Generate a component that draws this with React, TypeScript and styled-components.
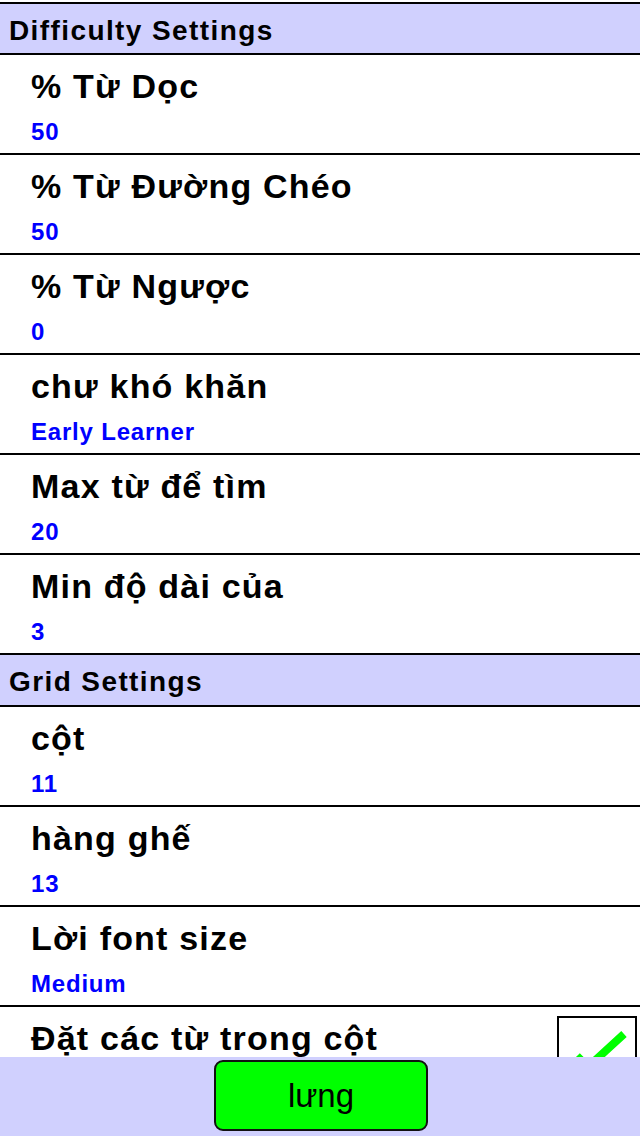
import React from "react";
import styled, { createGlobalStyle } from "styled-components";

interface Setting {
  title: string;
  value?: string;
  checked?: boolean;
}

interface Section {
  name: string;
  items: Setting[];
}

const sections: Section[] = [
  {
    name: "Difficulty Settings",
    items: [
      { title: "% Từ Dọc", value: "50" },
      { title: "% Từ Đường Chéo", value: "50" },
      { title: "% Từ Ngược", value: "0" },
      { title: "chư khó khăn", value: "Early Learner" },
      { title: "Max từ để tìm", value: "20" },
      { title: "Min độ dài của", value: "3" },
    ],
  },
  {
    name: "Grid Settings",
    items: [
      { title: "cột", value: "11" },
      { title: "hàng ghế", value: "13" },
      { title: "Lời font size", value: "Medium" },
      { title: "Đặt các từ trong cột", checked: true },
    ],
  },
];

const App: React.FC = () => {
  return (
    <>
      <GlobalStyle />
      <Page>
        {sections.map((section, i) => (
          <React.Fragment key={section.name}>
            <SectionHeader $first={i === 0}>{section.name}</SectionHeader>
            {section.items.map((item) => (
              <Row key={item.title}>
                <RowText>
                  <RowTitle>{item.title}</RowTitle>
                  {item.value && <RowValue>{item.value}</RowValue>}
                </RowText>
                {item.checked !== undefined && (
                  <CheckBox>
                    {item.checked && (
                      <svg width="76" height="76" viewBox="0 0 76 76">
                        <polyline
                          points="18,38 29,49 65,16"
                          fill="none"
                          stroke="#00ff00"
                          strokeWidth="8"
                        />
                      </svg>
                    )}
                  </CheckBox>
                )}
              </Row>
            ))}
          </React.Fragment>
        ))}
      </Page>
      <BottomBar>
        <BackButton>lưng</BackButton>
      </BottomBar>
    </>
  );
};

export default App;

const GlobalStyle = createGlobalStyle`
  html, body {
    margin: 0;
    padding: 0;
    background: #ffffff;
    font-family: "Liberation Sans", Arial, Helvetica, sans-serif;
  }
`;

const Page = styled.div`
  display: flex;
  flex-direction: column;
  padding-top: 2px;
  width: 640px;
`;

const SectionHeader = styled.div<{ $first?: boolean }>`
  background-color: #d0d0fe;
  border-top: ${(p) => (p.$first ? "2px solid #000" : "none")};
  border-bottom: 2px solid #000;
  height: ${(p) => (p.$first ? "44px" : "45px")};
  padding-top: 5px;
  padding-left: 9px;
  font-size: 28px;
  line-height: 44px;
  font-weight: 700;
  letter-spacing: 1.4px;
  color: #000;
`;

const Row = styled.div`
  display: flex;
  align-items: flex-start;
  justify-content: space-between;
  height: 98px;
  border-bottom: 2px solid #000;
  padding-left: 31px;
  padding-right: 3px;
`;

const RowText = styled.div`
  display: flex;
  flex-direction: column;
  padding-top: 13px;
`;

const RowTitle = styled.div`
  font-size: 34px;
  line-height: 37px;
  font-weight: 700;
  letter-spacing: 1.2px;
  color: #000;
`;

const RowValue = styled.div`
  margin-top: 13px;
  font-size: 24px;
  line-height: 28px;
  font-weight: 700;
  letter-spacing: 0.8px;
  color: #0000ff;
`;

const CheckBox = styled.div`
  width: 76px;
  height: 76px;
  margin-top: 9px;
  border: 2px solid #000;
  background: #fff;
`;

const BottomBar = styled.div`
  position: fixed;
  left: 0;
  right: 0;
  bottom: 0;
  height: 79px;
  background-color: #d0d0fe;
  display: flex;
  justify-content: center;
  padding-top: 3px;
  box-sizing: border-box;
`;

const BackButton = styled.button`
  width: 214px;
  height: 71px;
  margin-left: 2px;
  background-color: #00ff00;
  border: 2px solid #111;
  border-radius: 9px;
  font-family: "Liberation Sans", Arial, Helvetica, sans-serif;
  font-size: 33px;
  color: #000;
  padding: 0;
  cursor: pointer;
`;
